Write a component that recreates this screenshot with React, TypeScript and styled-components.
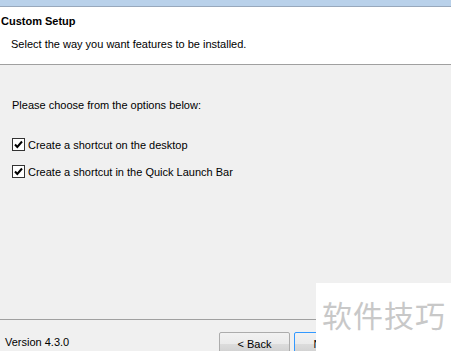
import React from 'react';
import styled, { createGlobalStyle } from 'styled-components';

const GlobalStyle = createGlobalStyle`
  html, body {
    margin: 0;
    padding: 0;
    background: #f0f0f0;
  }
`;

const Window = styled.div`
  position: relative;
  width: 451px;
  height: 351px;
  overflow: hidden;
  display: flex;
  flex-direction: column;
  background: #f0f0f0;
  font-family: Tahoma, "Liberation Sans", Arial, sans-serif;
  font-size: 11px;
  color: #000;
`;

const TitleStrip = styled.div`
  height: 6px;
  flex-shrink: 0;
  background: #b9d1ea;
  border-bottom: 1px solid #98a8bc;
`;

const Header = styled.div`
  height: 58px;
  flex-shrink: 0;
  background: #ffffff;
  border-bottom: 1px solid #a0a0a0;
  box-sizing: border-box;
  padding-top: 7px;
  display: flex;
  flex-direction: column;
  gap: 9px;
`;

const HeaderTitle = styled.div`
  font-weight: bold;
  line-height: 14px;
  padding-left: 1px;
`;

const HeaderText = styled.div`
  line-height: 14px;
  padding-left: 11px;
`;

const Body = styled.div`
  flex: 1;
  padding: 33px 12px 0;
  display: flex;
  flex-direction: column;
`;

const Prompt = styled.div`
  line-height: 14px;
  margin-bottom: 19px;
`;

const OptionRow = styled.label`
  display: flex;
  align-items: center;
  gap: 3px;
  height: 27px;
  line-height: 14px;
`;

const Box = styled.span`
  width: 13px;
  height: 13px;
  box-sizing: border-box;
  border: 1px solid #333;
  background: #fff;
  display: flex;
  align-items: center;
  justify-content: center;
`;

const Footer = styled.div`
  height: 32px;
  flex-shrink: 0;
  box-sizing: border-box;
  border-top: 1px solid #a0a0a0;
  display: flex;
  align-items: flex-start;
  justify-content: space-between;
  padding: 12px 0 0 5px;
`;

const Version = styled.div`
  line-height: 14px;
  padding-top: 3px;
`;

const Buttons = styled.div`
  display: flex;
  gap: 4px;
  padding-right: 11px;
`;

const Button = styled.button<{ $default?: boolean }>`
  width: 71px;
  height: 23px;
  flex-shrink: 0;
  box-sizing: border-box;
  font-family: inherit;
  font-size: 11px;
  color: #000;
  border: 1px solid ${p => (p.$default ? '#3399ff' : '#acacac')};
  border-radius: 2px;
  background: linear-gradient(#f2f2f2, #ebebeb 50%, #dddddd 50%, #cfcfcf);
  padding: 0;
`;

const Watermark = styled.div`
  position: absolute;
  left: 316px;
  top: 283px;
  right: 0;
  bottom: 0;
  background: #ffffff;
  display: flex;
  align-items: center;
  padding: 0 0 6px 6px;
  font-family: "Noto Sans CJK SC", sans-serif;
  font-size: 30px;
  color: #c8c8c8;
  letter-spacing: 1px;
`;

const Check = () => (
  <Box>
    <svg width="9" height="9" viewBox="0 0 9 9">
      <path d="M1 4.5 L3.3 7 L8 1.5" fill="none" stroke="#000" strokeWidth="2" />
    </svg>
  </Box>
);

const options = [
  'Create a shortcut on the desktop',
  'Create a shortcut in the Quick Launch Bar',
];

export default function App() {
  return (
    <Window>
      <GlobalStyle />
      <TitleStrip />
      <Header>
        <HeaderTitle>Custom Setup</HeaderTitle>
        <HeaderText>Select the way you want features to be installed.</HeaderText>
      </Header>
      <Body>
        <Prompt>Please choose from the options below:</Prompt>
        {options.map(o => (
          <OptionRow key={o}>
            <Check />
            {o}
          </OptionRow>
        ))}
      </Body>
      <Footer>
        <Version>Version 4.3.0</Version>
        <Buttons>
          <Button>&lt; Back</Button>
          <Button $default>Next &gt;</Button>
          <Button>Cancel</Button>
        </Buttons>
      </Footer>
      <Watermark>软件技巧</Watermark>
    </Window>
  );
}
